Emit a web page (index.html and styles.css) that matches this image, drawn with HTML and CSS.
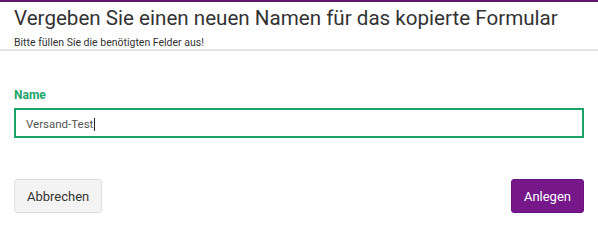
FILE: index.html
```html
<!DOCTYPE html>
<html lang="de">
<head>
<meta charset="utf-8">
<link rel="stylesheet" href="styles.css">
</head>
<body>
<div class="dialog">
  <div class="header">
    <h1 class="title">Vergeben Sie einen neuen Namen für das kopierte Formular</h1>
    <p class="subtitle">Bitte füllen Sie die benötigten Felder aus!</p>
  </div>
  <div class="body">
    <label class="label">Name</label>
    <div class="input"><span class="value">Versand-Test</span><span class="caret"></span></div>
  </div>
  <div class="footer">
    <button class="btn btn-default">Abbrechen</button>
    <button class="btn btn-primary">Anlegen</button>
  </div>
</div>
</body>
</html>
```
FILE: styles.css
```css
html, body {
  margin: 0;
  padding: 0;
  background: #fff;
}
body {
  font-family: Roboto, "Liberation Sans", sans-serif;
  color: #333;
}
.dialog {
  width: 598px;
  height: 226px;
  box-sizing: border-box;
  border-top: 2px solid #5c1a67;
}
.header {
  padding: 3px 14px 0 14px;
  height: 49px;
  box-sizing: border-box;
  border-bottom: 2px solid #e3e3e3;
}
.title {
  margin: 0;
  font-size: 20.6px;
  font-weight: 400;
  line-height: 26px;
  color: #333;
  white-space: nowrap;
}
.subtitle {
  margin: 5px 0 0 0;
  font-size: 10.5px;
  line-height: 14px;
  color: #333;
}
.body {
  padding: 36px 14px 0 14px;
  display: flex;
  flex-direction: column;
}
.label {
  font-size: 12px;
  font-weight: 700;
  color: #1ba36a;
  line-height: 16px;
  margin-bottom: 5px;
}
.input {
  height: 30px;
  box-sizing: border-box;
  border: 2px solid #1ba36a;
  display: flex;
  align-items: center;
  padding: 2px 0 0 10px;
  font-size: 11.5px;
  color: #555;
}
.caret {
  width: 1px;
  height: 13px;
  background: #222;
  margin-left: 1px;
}
.footer {
  display: flex;
  justify-content: space-between;
  padding: 41px 14px 0 14px;
}
.btn {
  height: 34px;
  font-family: Roboto, "Liberation Sans", sans-serif;
  font-size: 13px;
  border-radius: 3px;
  padding: 0 12px;
  cursor: pointer;
}
.btn-default {
  background: #f3f3f3;
  border: 1px solid #ddd;
  color: #333;
}
.btn-primary {
  background: #77188a;
  border: 1px solid #6a1080;
  color: #fff;
}
```
